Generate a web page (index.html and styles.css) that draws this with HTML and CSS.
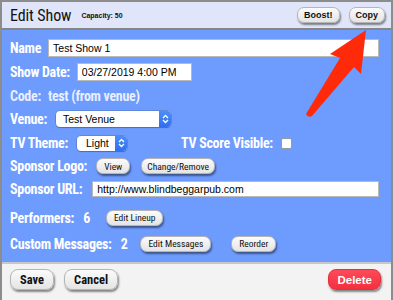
FILE: index.html
```html
<!DOCTYPE html>
<html>
<head>
<meta charset="utf-8">
<link rel="stylesheet" href="styles.css">
</head>
<body>
<div class="frame">
  <header class="head">
    <h1 class="title">Edit Show</h1>
    <span class="capacity">Capacity: 50</span>
    <div class="head-actions">
      <button class="btn btn-top">Boost!</button>
      <button class="btn btn-top">Copy</button>
    </div>
  </header>
  <main class="form">
    <div class="row r-name">
      <label class="lbl">Name</label>
      <input class="txt txt-wide" type="text" value="Test Show 1">
    </div>
    <div class="row r-date">
      <label class="lbl">Show Date:</label>
      <input class="txt txt-date" type="text" value="03/27/2019 4:00 PM">
    </div>
    <div class="row r-code">
      <span class="lbl dim">Code:</span>
      <span class="val dim">test (from venue)</span>
    </div>
    <div class="row r-venue">
      <label class="lbl">Venue:</label>
      <div class="sel sel-venue"><span class="sel-text">Test Venue</span><span class="sel-arrows"><svg width="7" height="10" viewBox="0 0 7 10"><path d="M1 4 L3.5 1.5 L6 4 M1 6 L3.5 8.5 L6 6" fill="none" stroke="#fff" stroke-width="1.3"/></svg></span></div>
    </div>
    <div class="row r-theme">
      <label class="lbl">TV Theme:</label>
      <div class="sel sel-theme"><span class="sel-text">Light</span><span class="sel-arrows"><svg width="7" height="10" viewBox="0 0 7 10"><path d="M1 4 L3.5 1.5 L6 4 M1 6 L3.5 8.5 L6 6" fill="none" stroke="#fff" stroke-width="1.3"/></svg></span></div>
      <label class="lbl lbl-score">TV Score Visible:</label>
      <span class="check"></span>
    </div>
    <div class="row r-logo">
      <label class="lbl">Sponsor Logo:</label>
      <button class="btn btn-sm">View</button>
      <button class="btn btn-sm btn-change">Change/Remove</button>
    </div>
    <div class="row r-url">
      <label class="lbl lbl-url">Sponsor URL:</label>
      <input class="txt txt-wide" type="text" value="http://www.blindbeggarpub.com">
    </div>
    <div class="row r-perf">
      <span class="lbl">Performers:</span>
      <span class="val count">6</span>
      <button class="btn btn-sm">Edit Lineup</button>
    </div>
    <div class="row r-msg">
      <span class="lbl">Custom Messages:</span>
      <span class="val count">2</span>
      <button class="btn btn-sm">Edit Messages</button>
      <button class="btn btn-sm btn-reorder">Reorder</button>
    </div>
  </main>
  <footer class="foot">
    <button class="btn btn-foot">Save</button>
    <button class="btn btn-foot">Cancel</button>
    <button class="btn btn-foot btn-delete">Delete</button>
  </footer>
</div>
<svg class="arrow" width="393" height="300" viewBox="0 0 393 300">
  <path d="M366 30 L361 74 L354 67 L312 116 Q308 118 306 114 L340 58 L330 54 Z" fill="#ff2a0a"/>
</svg>
</body>
</html>
```
FILE: styles.css
```css
html, body {
  margin: 0;
  padding: 0;
}
body {
  width: 393px;
  height: 300px;
  overflow: hidden;
  position: relative;
  font-family: "Liberation Sans", Arial, sans-serif;
  background: #f3f3f3;
}
.frame {
  box-sizing: border-box;
  width: 393px;
  height: 300px;
  border: 2px solid #8c8c8c;
  border-bottom: none;
  display: flex;
  flex-direction: column;
}
.head {
  height: 26px;
  background: #e0e5f9;
  border-bottom: 2px solid #858585;
  display: flex;
  align-items: center;
  padding: 0 6px 0 8px;
}
.title {
  margin: 0;
  font-family: "Roboto Condensed", "DejaVu Sans Condensed", sans-serif;
  font-weight: normal;
  font-size: 16px;
  letter-spacing: -0.1px;
  color: #111;
}
.capacity {
  margin-left: 10px;
  font-size: 7px;
  font-weight: bold;
  color: #111;
  padding-top: 1px;
}
.head-actions {
  margin-left: auto;
  display: flex;
  gap: 9px;
}
.btn {
  font-family: "Roboto Condensed", "DejaVu Sans Condensed", sans-serif;
  color: #111;
  background: linear-gradient(#fbfbfb, #e4e4e4);
  border: 1px solid #b5b5b5;
  border-radius: 7px;
  box-shadow: 1px 2px 2px rgba(0, 0, 0, 0.45);
  padding: 0;
  cursor: pointer;
}
.btn-top {
  font-family: "Liberation Sans", sans-serif;
  font-weight: bold;
  font-size: 9px;
  height: 16px;
  padding: 0 6px;
}
.form {
  height: 232px;
  background: #6e9bfe;
  padding: 6px 12px 0 8px;
  box-sizing: border-box;
}
.row {
  display: flex;
  align-items: center;
  height: 24px;
}
.r-code { height: 23px; }
.r-logo { height: 22px; }
.r-url { height: 23px; }
.r-perf { height: 23px; margin-top: 6px; }
.r-msg { height: 23px; margin-top: 3px; }
.lbl {
  font-family: "Roboto Condensed", "DejaVu Sans Condensed", sans-serif;
  font-weight: bold;
  font-size: 14px;
  letter-spacing: -0.3px;
  color: #fff;
  margin-right: 7px;
  white-space: nowrap;
}
.lbl-url { margin-right: 10px; }
.val {
  font-family: "Roboto Condensed", "DejaVu Sans Condensed", sans-serif;
  font-weight: bold;
  font-size: 14px;
  letter-spacing: -0.3px;
  color: #fff;
}
.dim {
  color: rgba(255, 255, 255, 0.86);
}
.count {
  margin: 0 16px 0 2px;
}
.txt {
  box-sizing: border-box;
  font-family: "Liberation Sans", sans-serif;
  font-size: 10.5px;
  color: #000;
  background: #fff;
  border: 1px solid #b9b9b9;
  padding: 0 4px;
  outline: none;
  margin: 0;
}
.txt-wide {
  flex: 1;
  height: 18px;
}
.r-url .txt-wide { height: 16px; }
.txt-date {
  width: 115px;
  height: 18px;
}
.sel {
  box-sizing: border-box;
  display: flex;
  align-items: stretch;
  background: #fff;
  border-radius: 4px;
  box-shadow: 0 0 0 0.5px rgba(0, 0, 0, 0.25), 0 1px 1px rgba(0, 0, 0, 0.2);
  overflow: hidden;
}
.sel-text {
  flex: 1;
  font-family: "Liberation Sans", sans-serif;
  font-size: 10.5px;
  color: #000;
  padding-left: 7px;
  display: flex;
  align-items: center;
}
.sel-arrows {
  width: 12px;
  background: linear-gradient(#4d8df8, #2f6ff0);
  display: flex;
  align-items: center;
  justify-content: center;
}
.sel-venue { width: 115px; height: 16px; margin-left: 2px; }
.sel-theme { width: 50px; height: 15px; margin-left: 2px; }
.sel-theme .sel-text { padding-left: 9px; }
.lbl-score { margin-left: 54px; margin-right: 8px; }
.check {
  width: 11px;
  height: 11px;
  box-sizing: border-box;
  background: #fff;
  border: 1px solid #9a9a9a;
  border-radius: 2px;
}
.btn-sm {
  font-size: 9.5px;
  height: 16px;
  padding: 0 7px;
}
.r-logo .lbl { margin-right: 9px; }
.btn-change { margin-left: 11px; padding: 0 5px; }
.btn-reorder { margin-left: 20px; }
.r-msg .count { margin-right: 13px; }
.foot {
  flex: 1;
  background: #f3f3f3;
  border-top: 2px solid #c8c8c8;
  display: flex;
  align-items: flex-start;
  padding: 5px 10px 0 8px;
  gap: 10px;
}
.btn-foot {
  font-weight: bold;
  font-size: 12.5px;
  height: 21px;
  padding: 0 9px;
  border-radius: 8px;
}
.btn-delete {
  margin-left: auto;
  font-family: "Liberation Sans", sans-serif;
  font-size: 11.5px;
  color: #fff;
  background: linear-gradient(#ff4a5a, #f3303f);
  border-color: #e0303c;
  padding: 0 8px;
}
.arrow {
  position: absolute;
  left: 0;
  top: 0;
  pointer-events: none;
}
```
